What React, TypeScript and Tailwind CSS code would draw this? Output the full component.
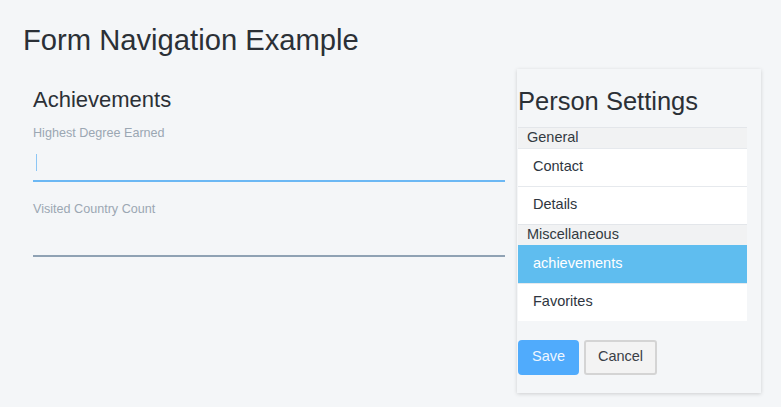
const sections = [
  { title: 'General', items: ['Contact', 'Details'] },
  { title: 'Miscellaneous', items: ['achievements', 'Favorites'] },
]

function Field({ label, focused }: { label: string; focused?: boolean }) {
  return (
    <div>
      <label className="block text-[12.6px] leading-none text-[#9ba7b3]">{label}</label>
      <div className="relative mt-[2px]">
        <input
          type="text"
          className={`block h-[40px] w-full bg-transparent pl-[3px] text-[14px] text-[#2b3036] caret-transparent outline-none border-b-2 ${
            focused ? 'border-[#6cb8f4]' : 'border-[#8fa2b4]'
          }`}
        />
        {focused && <span className="pointer-events-none absolute left-[3px] top-[12px] h-[17px] w-px bg-[#8cc6f5]" />}
      </div>
    </div>
  )
}

export default function App() {
  const active = 'achievements'

  return (
    <div className="min-h-screen bg-[#f4f6f8] pl-[23px] pr-[20px] pt-[26px] font-['Liberation_Sans',Arial,sans-serif] text-[#2b3036]">
      <h1 className="text-[29.2px] leading-none">Form Navigation Example</h1>

      <div className="mt-[14px] flex items-start gap-[12px]">
        {/* form */}
        <div className="flex-1 pl-[10px] pt-[20px]">
          <h2 className="text-[22px] leading-none">Achievements</h2>
          <div className="mt-[16px] flex flex-col gap-[21px]">
            <Field label="Highest Degree Earned" focused />
            <Field label="Visited Country Count" />
          </div>
        </div>

        {/* settings panel */}
        <div className="w-[244px] bg-[#f4f6f8] pl-px pr-[14px] pt-[20px] pb-[18px] shadow-[0_1px_4px_rgba(0,0,0,0.16)]">
          <h2 className="text-[25.5px] leading-none">Person Settings</h2>
          <div className="mt-[12px]">
            {sections.map((s) => (
              <div key={s.title}>
                <div className="flex h-[21px] items-center border-t border-[#e3e6ea] bg-[#f1f2f3] pl-[9px] text-[14.5px] text-[#333a41]">
                  {s.title}
                </div>
                {s.items.map((item) => (
                  <div
                    key={item}
                    className={`flex h-[38px] items-center border-t pl-[15px] text-[14.5px] ${
                      item === active
                        ? 'border-[#5fbdef] bg-[#5fbdef] text-white'
                        : 'border-[#e6e9ed] bg-white text-[#2e3540]'
                    }`}
                  >
                    {item}
                  </div>
                ))}
              </div>
            ))}
          </div>
          <div className="mt-[19px] flex gap-[5px]">
            <button className="h-[35px] w-[61px] rounded-[4px] bg-[#50abfc] text-[14.5px] text-[#eef6ff]">Save</button>
            <button className="h-[35px] w-[73px] rounded-[3px] border-2 border-[#d4d4d4] bg-[#f3f3f3] text-[14.5px] text-[#3a4047]">
              Cancel
            </button>
          </div>
        </div>
      </div>
    </div>
  )
}
